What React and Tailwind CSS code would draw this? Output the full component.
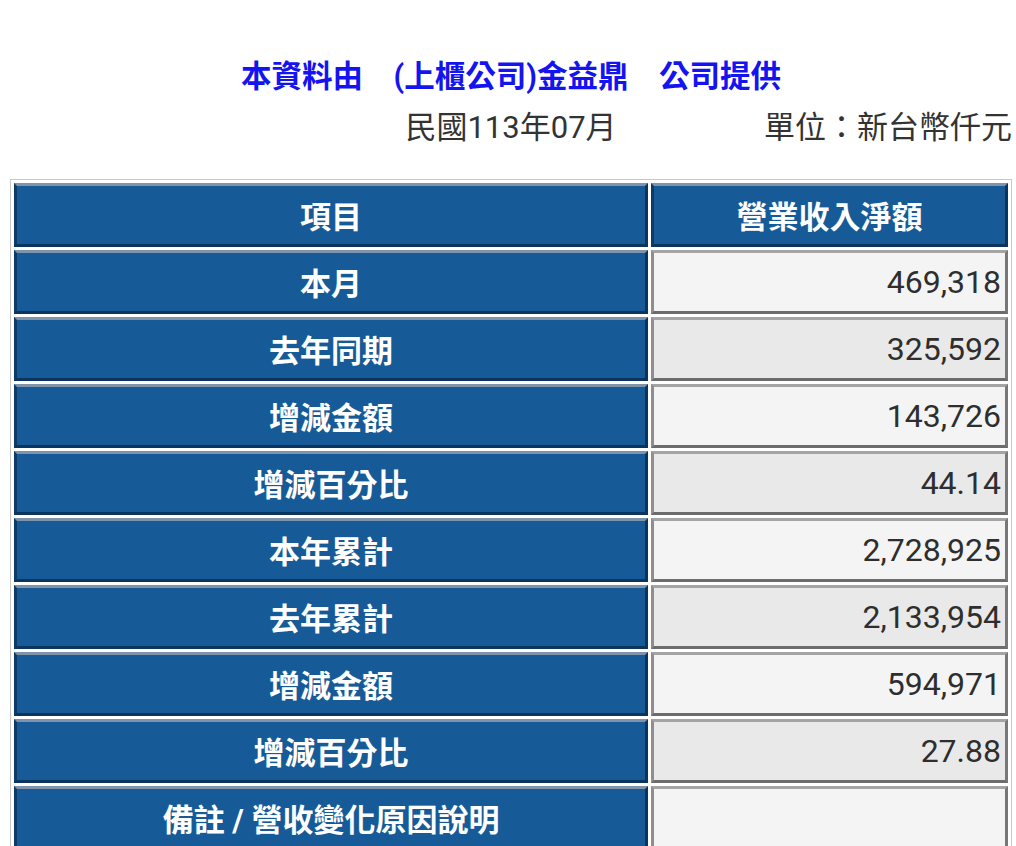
const rows = [
  { label: '本月', value: '469,318' },
  { label: '去年同期', value: '325,592' },
  { label: '增減金額', value: '143,726' },
  { label: '增減百分比', value: '44.14' },
  { label: '本年累計', value: '2,728,925' },
  { label: '去年累計', value: '2,133,954' },
  { label: '增減金額', value: '594,971' },
  { label: '增減百分比', value: '27.88' },
  { label: '備註 / 營收變化原因說明', value: '' },
]

const blueCell =
  'h-[64px] pt-[6px] bg-[#165b97] text-white font-bold text-center align-middle border-[3px] border-t-[#7f94aa] border-l-[#0e3a66] border-b-[#0c355e] border-r-[#0c355e]'

function App() {
  return (
    <div className="min-h-screen bg-white pl-[10px] pr-[4px] pt-[57px] font-['Roboto','Noto_Sans_CJK_TC',sans-serif]">
      {/* header */}
      <div className="text-center text-[30.5px] leading-[40px] font-bold text-[#1414f0] whitespace-pre">
        本資料由　(上櫃公司)金益鼎　公司提供
      </div>
      <div className="mt-[11px] grid grid-cols-3 text-[31px] leading-[40px] text-[#333]">
        <div></div>
        <div className="text-center whitespace-nowrap">民國113年07月</div>
        <div className="text-right whitespace-nowrap">單位：新台幣仟元</div>
      </div>

      {/* table */}
      <table className="mt-[31px] w-full border-separate border-spacing-[3px] border border-[#c8c8c8] text-[31px]">
        <tbody>
          <tr>
            <td className={blueCell + ' w-[64%]'}>項目</td>
            <td className={blueCell}>營業收入淨額</td>
          </tr>
          {rows.map((r, i) => (
            <tr key={i}>
              <td className={blueCell}>{r.label}</td>
              <td
                className={
                  'h-[64px] text-right align-middle pr-[4px] text-[32px] text-[#2e2e2e] border-[3px] border-t-[#a4a4a4] border-l-[#8e8e8e] border-b-[#6c6c6c] border-r-[#777] ' +
                  (i % 2 === 0 ? 'bg-[#f4f4f4]' : 'bg-[#e9e9e9]')
                }
              >
                {r.value}
              </td>
            </tr>
          ))}
        </tbody>
      </table>
    </div>
  )
}

export default App
